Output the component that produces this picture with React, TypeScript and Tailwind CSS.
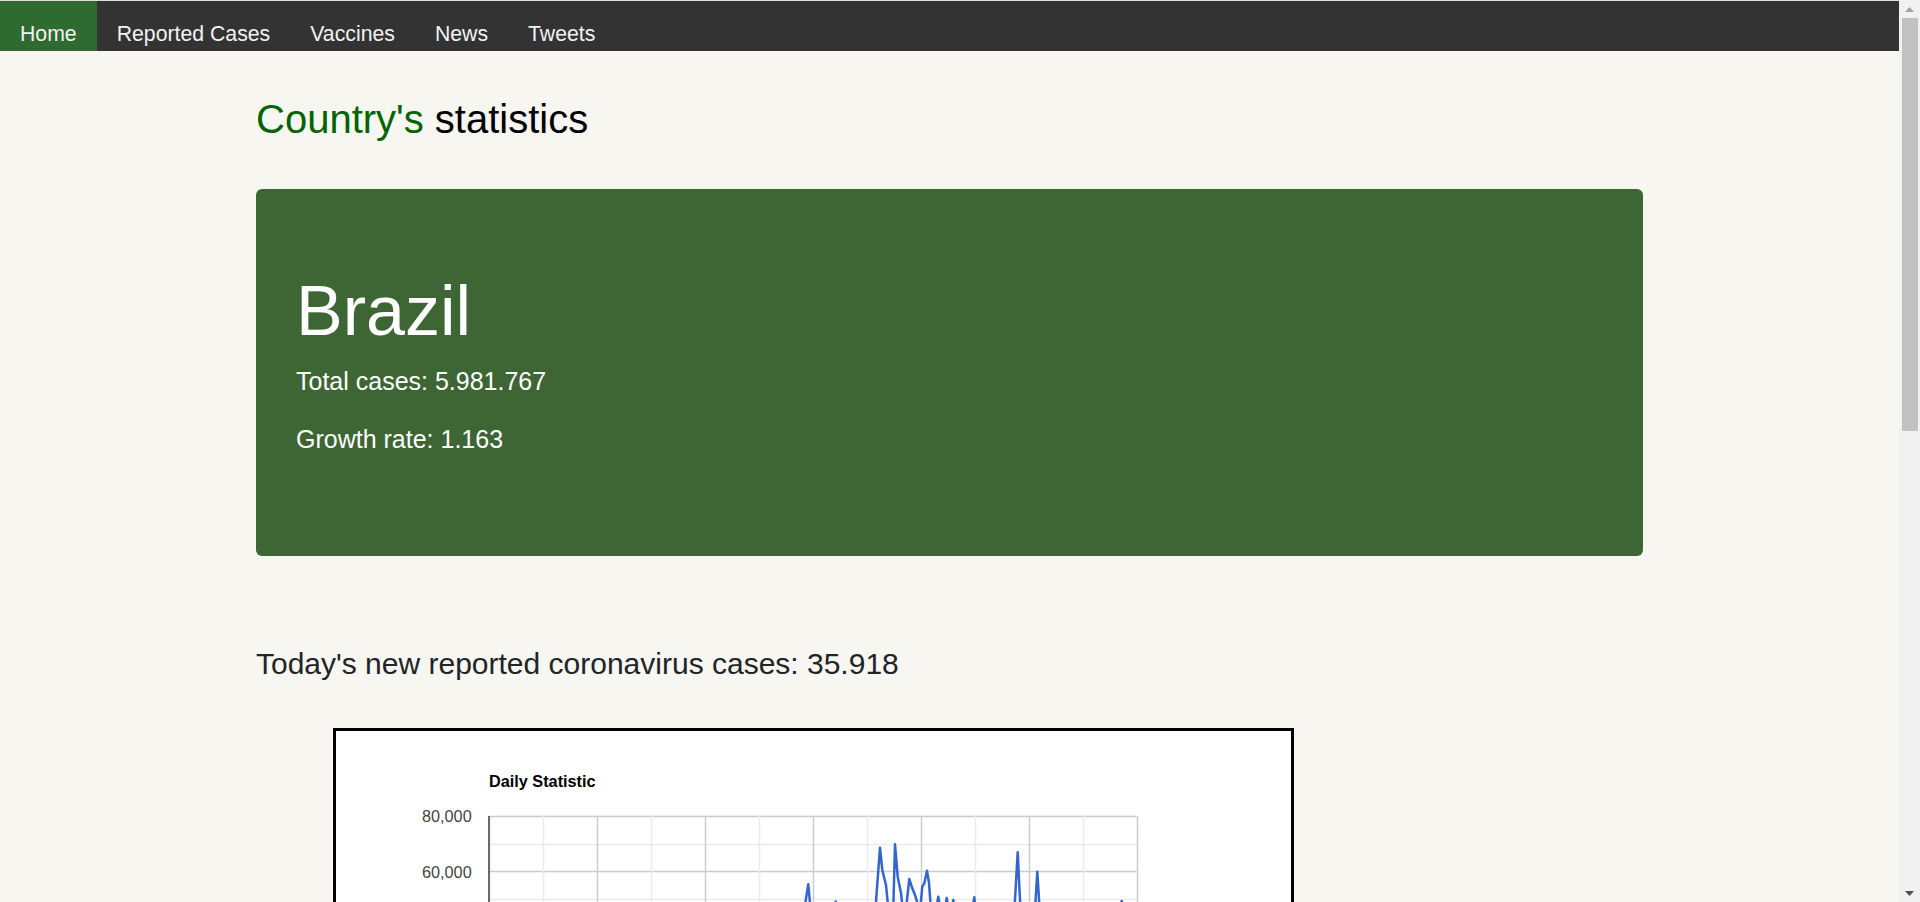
import React from 'react';

const navLinks = ['Home', 'Reported Cases', 'Vaccines', 'News', 'Tweets'];

// chart geometry (inside the bordered box)
const LEFT = 153;
const TOP = 85;
const STEP_X = 53.97;
const STEP_Y = 27.65; // 10,000 cases
const ZERO = TOP + STEP_Y * 8;

// daily cases, traced in page pixels and shifted into the box
const trace: [number, number][] = [
  [489, 1037], [520, 1035], [560, 1020], [600, 1000], [640, 985], [680, 975],
  [720, 965], [760, 950], [790, 940], [800, 930], [805, 905], [808.3, 884.3],
  [811, 915], [815, 935], [825, 925], [835.7, 901.5], [838, 925], [850, 935],
  [865, 925], [875, 915], [880, 847.7], [882.3, 870], [886, 885], [889, 915],
  [893, 920], [895, 844.3], [897.7, 876.7], [901, 893], [904, 920], [907, 900],
  [909.3, 879], [912.3, 888.3], [915, 895], [918, 905], [920, 912], [922.3, 886.7],
  [924.3, 883.3], [927, 870.7], [929, 883], [931, 910], [935, 915], [938.3, 896.7],
  [941, 912], [944, 915], [946.7, 898], [949, 912], [951, 915], [953.3, 900],
  [956, 915], [965, 920], [971, 915], [974.3, 897.3], [977, 920], [990, 925],
  [1005, 930], [1012, 925], [1015, 900], [1017.7, 852.3], [1020, 900], [1024, 935],
  [1030, 930], [1035, 910], [1037.3, 871.7], [1040, 915], [1050, 940], [1070, 955],
  [1090, 945], [1110, 930], [1118, 915], [1121.7, 901], [1125, 920], [1136.7, 930],
];

const points = trace.map(([x, y]) => `${x - 336},${y - 731}`).join(' ');

// only the labels that are inside the first screen
const yLabels = ['80,000', '60,000'];

const DailyChart: React.FC = () => (
  <svg width="955" height="420" className="block" fontFamily="'Liberation Sans', Arial, sans-serif">
    <text x={LEFT} y={55.7} fontSize="16.25" fontWeight="bold" fill="#000">
      Daily Statistic
    </text>

    {Array.from({ length: 9 }).map((_, k) => (
      <line
        key={`h${k}`}
        x1={LEFT}
        x2={LEFT + STEP_X * 12}
        y1={Math.round(TOP + k * STEP_Y) + 0.5}
        y2={Math.round(TOP + k * STEP_Y) + 0.5}
        stroke={k % 2 === 0 ? '#cccccc' : '#ebebeb'}
        strokeWidth="1.5"
      />
    ))}
    {Array.from({ length: 13 }).map((_, j) => (
      <line
        key={`v${j}`}
        x1={Math.round(LEFT + j * STEP_X) + 0.5}
        x2={Math.round(LEFT + j * STEP_X) + 0.5}
        y1={TOP}
        y2={ZERO}
        stroke={j % 2 === 0 ? '#cccccc' : '#ebebeb'}
        strokeWidth="1.5"
      />
    ))}
    <line x1={LEFT} x2={LEFT} y1={TOP} y2={ZERO} stroke="#6b6b6b" strokeWidth="2" />
    <line x1={LEFT} x2={LEFT + STEP_X * 12} y1={ZERO} y2={ZERO} stroke="#333" strokeWidth="1.5" />

    {yLabels.map((label, i) => (
      <text
        key={label}
        x={135.7}
        y={91.3 + i * STEP_Y * 2}
        fontSize="16.25"
        fill="#444"
        textAnchor="end"
      >
        {label}
      </text>
    ))}

    <polyline
      points={points}
      fill="none"
      stroke="#3366cc"
      strokeWidth="2.5"
      strokeLinejoin="round"
      strokeLinecap="round"
    />
  </svg>
);

// the browser's scrollbar, as it shows in the screenshot
const Scrollbar: React.FC = () => (
  <div className="flex w-[21px] shrink-0 flex-col bg-[#f1f1f1]">
    <div className="flex h-[18px] items-center justify-center">
      <svg width="9" height="5" viewBox="0 0 9 5">
        <path d="M0 5 L4.5 0 L9 5 Z" fill="#a3a3a3" />
      </svg>
    </div>
    <div className="flex-1">
      <div className="mx-[2.5px] h-[413px] bg-[#c1c1c1]" />
    </div>
    <div className="flex h-[18px] items-center justify-center">
      <svg width="9" height="5" viewBox="0 0 9 5">
        <path d="M0 0 L9 0 L4.5 5 Z" fill="#505050" />
      </svg>
    </div>
  </div>
);

export default function App() {
  return (
    <div className="flex h-[902px] overflow-hidden bg-[#f7f6f0] font-['Liberation_Sans',Arial,sans-serif]">
      <div className="min-w-0 flex-1 overflow-hidden">
        <nav className="flex border-t border-[#dedede] bg-[#333333]">
          {navLinks.map((link, i) => (
            <a
              key={link}
              href="#"
              className={`px-[20px] pt-[21px] pb-[5px] text-[21.25px] leading-[24px] text-[#f2f2f2] ${
                i === 0 ? 'bg-[#2d6b30]' : ''
              }`}
            >
              {link}
            </a>
          ))}
        </nav>

        <main className="ml-[256px] w-[1387px] pt-[44px] pb-[737px]">
          <h2 className="text-[40px] leading-[48px]">
            <span className="text-[#006400]">Country's</span>{' '}
            <span className="text-black">statistics</span>
          </h2>

          <div className="mt-[46px] rounded-[6px] bg-[#3d6634] px-[40px] pt-[80px] pb-[98px] text-white">
            <h1 className="mb-[10px] text-[70px] leading-[84px]">Brazil</h1>
            <p className="mb-[20px] text-[25px] leading-[37.5px]">Total cases: 5.981.767</p>
            <p className="text-[25px] leading-[37.5px]">Growth rate: 1.163</p>
          </div>

          <h4 className="mt-[90px] text-[30px] leading-[36px] text-[#212529]">
            Today's new reported coronavirus cases: 35.918
          </h4>

          <div className="ml-[77px] mt-[46px] w-[961px] border-[3px] border-black bg-white">
            <DailyChart />
          </div>
        </main>
      </div>
      <Scrollbar />
    </div>
  );
}
